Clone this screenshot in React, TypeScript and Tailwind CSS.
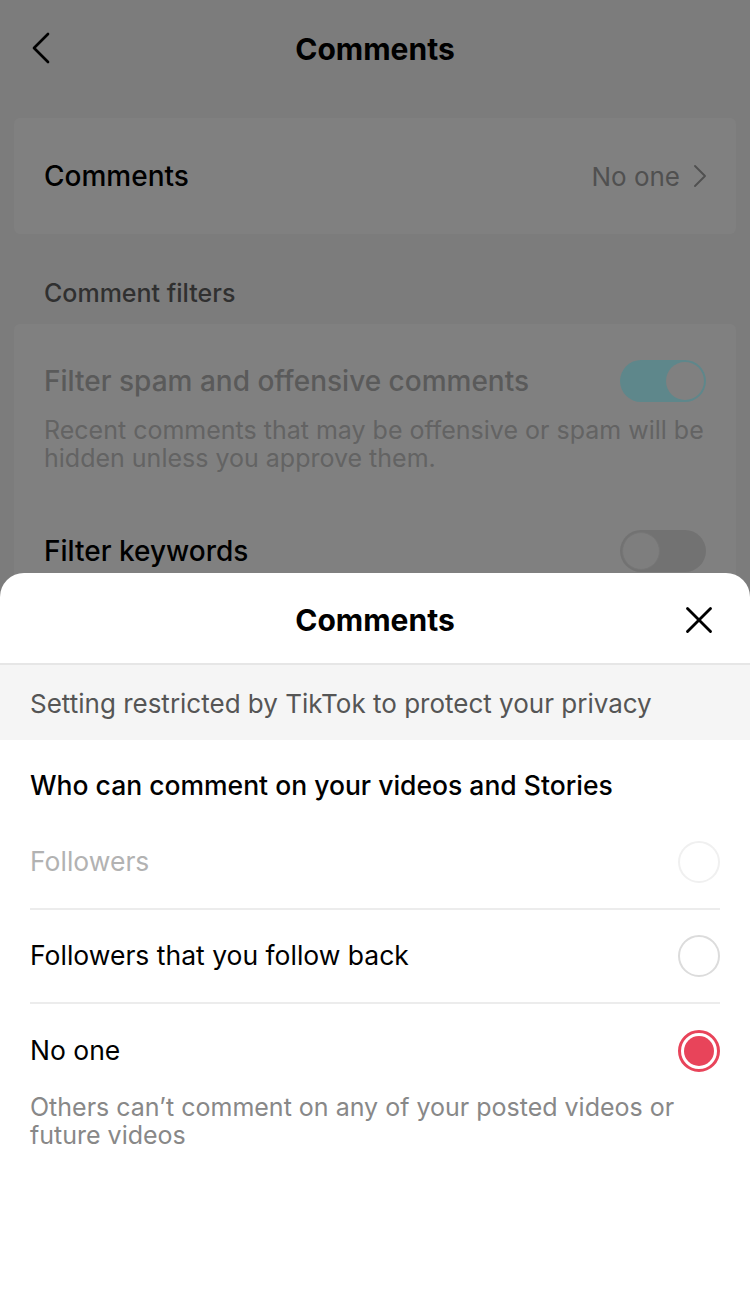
import { ChevronLeft, ChevronRight, X } from 'lucide-react';

function Toggle({ on }: { on: boolean }) {
  return (
    <div
      className={
        on
          ? 'flex h-[42px] w-[86px] items-center justify-end rounded-full bg-[#5e878b] p-[2px]'
          : 'flex h-[42px] w-[86px] items-center justify-start rounded-full bg-[#727272] p-[2px]'
      }
    >
      <div className={on ? 'h-[38px] w-[38px] rounded-full bg-[#808080]' : 'h-[38px] w-[38px] rounded-full border border-[#767676] bg-[#7e7e7e]'} />
    </div>
  );
}

function Radio({ state }: { state: 'disabled' | 'off' | 'on' }) {
  if (state === 'on') {
    return (
      <div className="flex h-[42px] w-[42px] items-center justify-center rounded-full border-[3px] border-[#e8445a]">
        <div className="h-[30px] w-[30px] rounded-full bg-[#e8445a]" />
      </div>
    );
  }
  return (
    <div
      className={
        state === 'disabled'
          ? 'h-[42px] w-[42px] rounded-full border-2 border-[#f0f0f0]'
          : 'h-[42px] w-[42px] rounded-full border-2 border-[#dcdcdc]'
      }
    />
  );
}

export default function App() {
  const options: { label: string; state: 'disabled' | 'off' | 'on' }[] = [
    { label: 'Followers', state: 'disabled' },
    { label: 'Followers that you follow back', state: 'off' },
    { label: 'No one', state: 'on' },
  ];

  return (
    <div className="relative h-[1294px] w-[750px] overflow-hidden bg-[#7c7c7c] font-['Inter',sans-serif] text-black">
      {/* Header */}
      <div className="relative flex h-[98px] items-center justify-center">
        <ChevronLeft className="absolute left-[13px] top-[20px] h-[56px] w-[56px]" strokeWidth={1.15} />
        <h1 className="text-[30px] font-bold">Comments</h1>
      </div>

      {/* Comments row */}
      <div className="mx-[14px] mt-[20px] flex h-[116px] items-center justify-between rounded-[6px] bg-[#808080] pl-[30px] pr-[16px]">
        <span className="text-[28px] font-medium">Comments</span>
        <div className="flex items-center text-[#505050]">
          <span className="text-[26px]">No one</span>
          <ChevronRight className="h-[40px] w-[40px]" strokeWidth={1.15} />
        </div>
      </div>

      <div className="px-[44px] pb-[11px] pt-[41px] text-[25px] font-medium text-[#303030]">Comment filters</div>

      <div className="mx-[14px] rounded-[6px] bg-[#808080] px-[30px] pt-[36px]">
        <div className="flex items-center justify-between">
          <span className="text-[28px] font-medium text-[#5a5a5a]">Filter spam and offensive comments</span>
          <Toggle on />
        </div>
        <p className="mt-[14px] text-[25px] leading-[28px] text-[#636363]">
          Recent comments that may be offensive or spam will be hidden unless you approve them.
        </p>
        <div className="mt-[58px] flex items-center justify-between">
          <span className="text-[28px] font-medium">Filter keywords</span>
          <Toggle on={false} />
        </div>
        <div className="h-[100px]" />
      </div>

      {/* Bottom sheet */}
      <div className="absolute inset-x-0 bottom-0 top-[573px] rounded-t-[24px] bg-white">
        <div className="relative flex h-[92px] items-center justify-center border-b-2 border-[#e6e6e6] pt-[4px]">
          <h2 className="text-[30px] font-bold">Comments</h2>
          <X className="absolute right-[28px] top-[24px] h-[46px] w-[46px]" strokeWidth={1.5} />
        </div>
        <div className="flex h-[75px] items-center bg-[#f5f5f5] px-[30px] pt-[2px] text-[26px] text-[#555555]">
          Setting restricted by TikTok to protect your privacy
        </div>
        <div className="px-[30px]">
          <div className="pb-[10px] pt-[26px] text-[26.5px] font-medium">Who can comment on your videos and Stories</div>
          {options.map((o, i) => (
            <div
              key={o.label}
              className={
                i < options.length - 1
                  ? 'flex h-[94px] items-center justify-between border-b-2 border-[#ececec]'
                  : 'flex h-[94px] items-center justify-between'
              }
            >
              <span className={o.state === 'disabled' ? 'text-[26.5px] text-[#b2b2b2]' : 'text-[26.5px] text-black'}>{o.label}</span>
              <Radio state={o.state} />
            </div>
          ))}
          <p className="-mt-[5px] pr-[40px] text-[25px] leading-[28px] text-[#888888]">
            Others can’t comment on any of your posted videos or future videos
          </p>
        </div>
      </div>
    </div>
  );
}
